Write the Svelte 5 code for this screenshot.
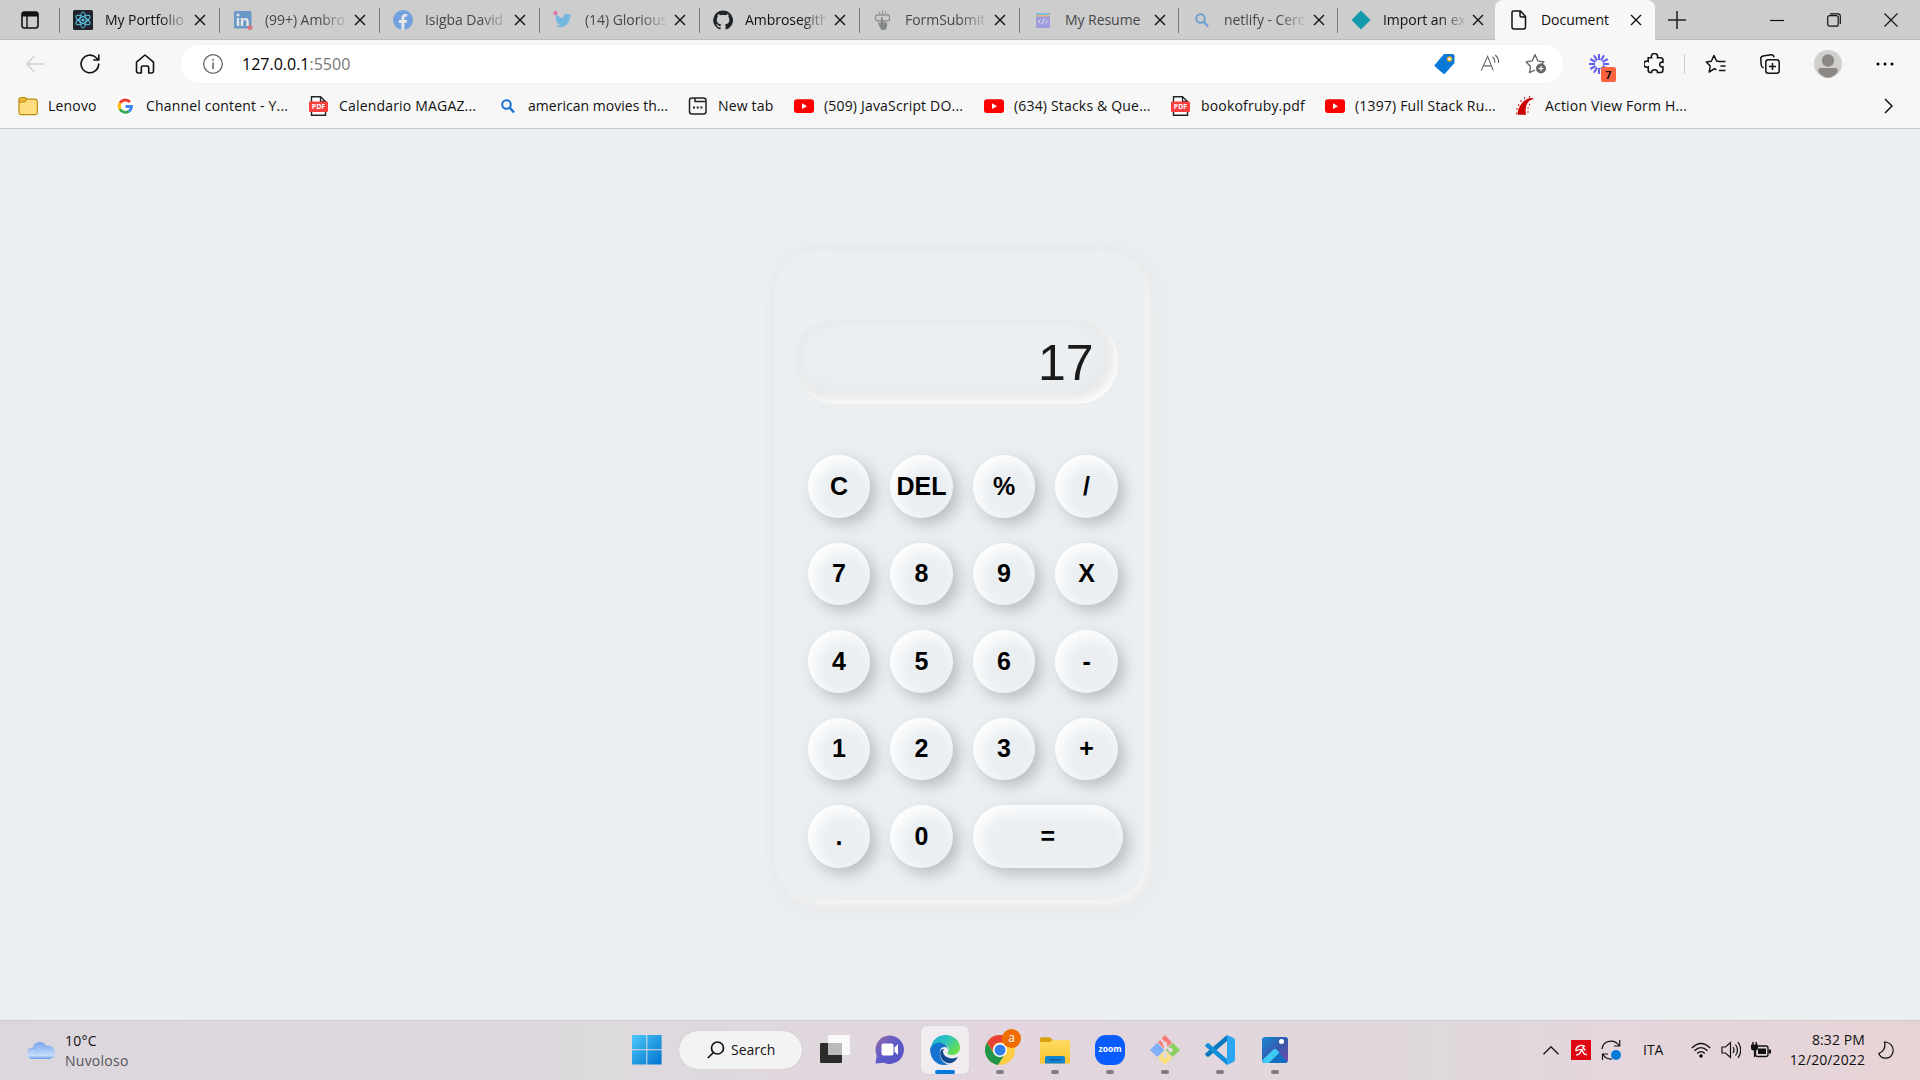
<script>
  const tabs = [
    { icon: 'react', title: 'My Portfolio', w: 160 },
    { icon: 'linkedin', title: '(99+) Ambrose', w: 160, dim: true },
    { icon: 'facebook', title: 'Isigba David', w: 160, dim: true },
    { icon: 'twitter', title: '(14) Glorious', w: 160, dim: true },
    { icon: 'github', title: 'Ambrosegithub', w: 160 },
    { icon: 'form', title: 'FormSubmit', w: 160, dim: true },
    { icon: 'resume', title: 'My Resume', w: 159, dim: true },
    { icon: 'lens', title: 'netlify - Cerca', w: 159, dim: true },
    { icon: 'diamond', title: 'Import an existing', w: 158 }
  ];
  const bookmarks = [
    { icon: 'folder', text: 'Lenovo', w: 98 },
    { icon: 'google', text: 'Channel content - Y...', w: 193 },
    { icon: 'pdf', text: 'Calendario MAGAZ...', w: 189 },
    { icon: 'lens', text: 'american movies th...', w: 190, snug: true },
    { icon: 'newtab', text: 'New tab', w: 106 },
    { icon: 'youtube', text: '(509) JavaScript DO...', w: 190 },
    { icon: 'youtube', text: '(634) Stacks & Que...', w: 187 },
    { icon: 'pdf', text: 'bookofruby.pdf', w: 154 },
    { icon: 'youtube', text: '(1397) Full Stack Ru...', w: 190 },
    { icon: 'rails', text: 'Action View Form H...', w: 200 }
  ];
  const keys = ['C', 'DEL', '%', '/', '7', '8', '9', 'X', '4', '5', '6', '-', '1', '2', '3', '+', '.', '0', '='];
  const apps = ['start', 'search', 'tasks', 'chat', 'edge', 'chrome', 'files', 'zoom', 'git', 'code', 'photos'];
  const running = ['chrome', 'files', 'zoom', 'git', 'code', 'photos'];
</script>

{#snippet icon(name)}
  <svg class="ic" viewBox="0 0 20 20" fill="none">
    {#if name === 'react'}
      <rect width="20" height="20" rx="1.5" fill="#20232a" />
      <g stroke="#5ccbe8" stroke-width="1">
        <ellipse cx="10" cy="10" rx="8" ry="3.1" transform="rotate(90 10 10)" />
        <ellipse cx="10" cy="10" rx="8" ry="3.1" transform="rotate(30 10 10)" />
        <ellipse cx="10" cy="10" rx="8" ry="3.1" transform="rotate(150 10 10)" />
      </g>
      <circle cx="10" cy="10" r="1.5" fill="#5ccbe8" />
    {:else if name === 'linkedin'}
      <rect x="1" y="1" width="17.5" height="17.5" rx="1.5" fill="#0a66c2" />
      <path d="M3.800 8h2.400v8H3.800zM7.800 8H10v1.200c1.300-2 5.800-2 5.800 2.200V16h-2.400v-4c0-2.700-3.200-2.600-3.200 0v4H7.800z" fill="#fff" />
      <circle cx="5" cy="5" r="1.500" fill="#fff" />
      <circle cx="17" cy="17.500" r="2.500" fill="#e0243a" />
    {:else if name === 'facebook'}
      <circle cx="10" cy="10" r="10" fill="#1877f2" />
      <path d="M8.400 20v-7H5.900v-3h2.500V7.800c0-2.500 1.500-3.900 3.800-3.900l2.100.2v2.500H13c-1.200 0-1.600.8-1.600 1.600V10h2.800l-.5 3h-2.300v7z" fill="#fff" />
    {:else if name === 'twitter'}
      <path d="M2 16c2.100.2 3.700-.4 5-1.500-1.700-.1-2.700-1-3.200-2.300h1.500C3.500 11.200 2.500 10 2.500 8.400l1.500.4C2.500 7.500 2.100 6 3 4.300c2 2.300 4.500 3.600 7.300 3.800C9.500 4.500 13.500 2.300 16 4.700l2.200-.9-1.500 2 2-.5-1.800 1.900C17 14.500 9.500 20 2 16z" fill="#1da1f2" />
      <circle cx="2.500" cy="3" r="2.200" fill="#f0287d" />
    {:else if name === 'github'}
      <path d="M10 .4a9.800 9.800 0 0 0-3.100 19.100c.5.1.7-.2.7-.5v-1.800c-2.800.6-3.300-1.300-3.300-1.300-.5-1.100-1.100-1.400-1.100-1.400-.9-.6.1-.6.1-.6 1 .1 1.500 1 1.500 1 .9 1.500 2.300 1.100 2.900.8.1-.6.300-1.100.6-1.300-2.200-.3-4.500-1.100-4.500-4.900 0-1.100.4-2 1-2.600-.1-.3-.4-1.300.1-2.600 0 0 .8-.3 2.700 1 1.600-.4 3.400-.4 5 0 1.900-1.300 2.700-1 2.700-1 .5 1.300.2 2.300.1 2.600.6.700 1 1.600 1 2.600 0 3.800-2.300 4.600-4.500 4.900.4.300.7.9.7 1.800V19c0 .3.200.6.700.5A9.800 9.800 0 0 0 10 .4z" fill="#1f242b" />
    {:else if name === 'form'}
      <rect x="2.500" y="5" width="14" height="6" rx="2" stroke="#555" stroke-width="1.300" />
      <path d="M6 1.500 7 4M9.500.5V4M13 1.500 12 4" stroke="#555" />
      <path d="M8 7.500c1-1 2 0 2 1V12l4 1c.7 3-.5 5-1.500 7h-4C7 18 5.500 15 5 13l3-.5z" fill="#3e4848" />
    {:else if name === 'resume'}
      <path d="M3 3h14v15H3z" fill="#6f6ff0" /><path d="M3 3h14v2.200H3z" fill="#38a8e8" /><path d="M3 5h14v1.500H3z" fill="#f9a33f" />
      <path d="m7.500 9.500-2 2 2 2M12.500 9.500l2 2-2 2M11 8.500l-2 6" stroke="#fff" />
    {:else if name === 'lens'}
      <circle cx="8.500" cy="8.500" r="4.300" stroke="#1372d3" stroke-width="2" /><path d="m12 12 4 4.500" stroke="#1372d3" stroke-width="2.400" />
    {:else if name === 'diamond'}
      <path d="m10 .5 9.500 9.500-9.500 9.500L.5 10z" fill="#159aad" />
    {:else if name === 'doc'}
      <path d="M4.500 1h7l5 5.500V17a2 2 0 0 1-2 2H5a2 2 0 0 1-2-2V2.500A1.500 1.500 0 0 1 4.500 1zM11 1v4.500a1.500 1.500 0 0 0 1.500 1.500h4" stroke="#111" stroke-width="1.500" />
    {:else if name === 'folder'}
      <path d="M1 4a2.500 2.500 0 0 1 2.500-2.500h3L9 3.200h8A2.200 2.200 0 0 1 19.300 5.500v11a2.200 2.200 0 0 1-2.200 2.200H3.200A2.200 2.200 0 0 1 1 16.500z" fill="#ffde82" stroke="#b98a0b" stroke-width="1.200" />
      <path d="M1 4.500a2.700 2.700 0 0 1 2.500-3h3L9 3.200 7 6H1z" fill="#eab63a" stroke="#b98a0b" />
    {:else if name === 'google'}
      <circle cx="9" cy="10" r="10" fill="#fff" />
      <g stroke-width="3">
        <path d="M14.100 6A6.300 6.300 0 0 0 4 7" stroke="#ea4335" />
        <path d="M4 7a6.300 6.300 0 0 0 0 6.200" stroke="#fbbc05" />
        <path d="M4 13.200a6.300 6.300 0 0 0 9 2" stroke="#34a853" />
        <path d="M13 15.200c1.700-1.200 2.400-2.700 2.400-4.700H9.500" stroke="#4285f4" />
      </g>
    {:else if name === 'pdf'}
      <path d="M2.500.7h9l5 4.800v13.800h-14z" fill="#fff" stroke="#222" stroke-width="1.400" /><path d="M11.500 1v4.500h5" stroke="#222" stroke-width="1.300" />
      <rect x="0" y="5.500" width="19" height="10.500" rx="1" fill="#f8403f" />
      <text x="9.500" y="13.300" text-anchor="middle" class="pdf">PDF</text>
    {:else if name === 'newtab'}
      <rect x="1.500" y="2" width="16.500" height="16" rx="2.500" stroke="#222" stroke-width="1.500" />
      <path d="M7 2v3.500h10.500" stroke="#222" stroke-width="1.500" />
      <path d="M5 11.500h2M8.700 11.500h2M12.400 11.500h2" stroke="#222" stroke-width="2" />
    {:else if name === 'youtube'}
      <rect y="3.200" width="20" height="13.800" rx="3" fill="#f00" /><path d="m8 7.300 5 2.900-5 2.900z" fill="#fff" />
    {:else if name === 'rails'}
      <path d="M2.500 18.800C2.500 12 7.500 5 13 2.500c2.500-1 4.800-.8 6 .8-6-.5-9.500 7-8 15.500z" fill="#c00" />
      <path d="M1 17.500h1M1.300 13h1.200M3 9h1.200M5.500 5h1.200M9 2h1.200M14 .8h1.200M12.500 12h1M12.500 16h1M14 8.500h1" stroke="#c00" stroke-width="1.300" />
    {/if}
  </svg>
{/snippet}

{#snippet cross()}
  <svg class="cross" viewBox="0 0 12 12"><path d="m1 1 10 10M11 1 1 11" stroke="#111" stroke-width="1.400" /></svg>
{/snippet}

{#snippet app(name)}
  <svg class="app" viewBox="0 0 30 30" fill="none">
    {#if name === 'start'}
      <path d="M0 0h14.300v14.300H0zM15.300 0h14.300v14.300H15.300zM0 15.300h14.300v14.300H0zM15.300 15.300h14.300v14.300H15.300z" fill="url(#win)" />
    {:else if name === 'tasks'}
      <rect y="8" width="22" height="20" rx="1" fill="#2c2c2a" /><rect x="8" y="0" width="22" height="20" rx="1" fill="#fff" fill-opacity=".82" /><path d="M8 8h14v12H8z" fill="#bbb" />
    {:else if name === 'chat'}
      <path d="M15 .5a14.200 14.200 0 1 1-6 27.200L.5 28.500l1.200-8A14.200 14.200 0 0 1 15 .5z" fill="url(#chat)" />
      <rect x="6.500" y="8.500" width="12" height="12" rx="2" fill="#fff" /><path d="m19.500 12.500 3.500-3.500v11L19.500 16.500z" fill="#fff" />
    {:else if name === 'edge'}
      <path d="M1 13C2 5 8 0 15 0c9 0 15 6 15 12.500 0 5-4 7.500-8 7.500-3 0-5-1-4.200-2.500C20 13 17 9 12 8.500 7 8 3 10 1 13z" fill="url(#edgeTop)" />
      <path d="M.1 14C2 9 7 7 11.500 8c4 .8 6.500 4 6.500 7.500 0-2.500-2-3.500-3.500-3.500-4 0-5 4-4.500 8 .6 5 4 8.500 8.500 9.500C8 32 0 25 .1 14z" fill="#1673d0" />
      <path d="M10.500 16C8.500 24 17 31 23.500 27c2-1.300 3.500-3 4.500-5.300-5 3.300-13 1.600-14.700-3.700-.5-1.500-.3-3 1.200-4-2 0-3.500.5-4 2z" fill="#114a91" />
    {:else if name === 'chrome'}
      <circle cx="15" cy="15" r="15" fill="#ffcd42" />
      <path d="M2 7.500A15 15 0 0 1 28 7.500H15a7 7 0 0 0-6.500 10z" fill="#e94134" />
      <path d="M2 7.500a15 15 0 0 0 11 22.400L20 19a7 7 0 0 1-11.500-1z" fill="#23964c" />
      <circle cx="15" cy="15" r="7" fill="#fff" /><circle cx="15" cy="15" r="5.500" fill="#337ee8" />
    {:else if name === 'files'}
      <path d="M0 4a1.700 1.700 0 0 1 1.700-1.700h8L13 5l-3 3H0z" fill="#db9f12" /><path d="M0 7h10l3-2h17v23.500H0z" fill="url(#fold)" />
      <path d="M5 28.500V23a2 2 0 0 1 2-2h16a2 2 0 0 1 2 2v5.500z" fill="#1683cf" /><path d="M9 24.700h12" stroke="#0a559c" stroke-width="1.200" />
    {:else if name === 'zoom'}
      <rect width="30" height="30" rx="11" fill="#0b5cff" /><text x="15" y="17.300" text-anchor="middle" class="zoomtext">zoom</text>
    {:else if name === 'git'}
      <path d="m15 0 7 7.500-7 7-7-7z" fill="#f77c78" /><path d="m7.200 7.800 7 7.200-7 7L0 15z" fill="#7eaff8" /><path d="m22.800 7.800 7.200 7.200-7.200 7-7-7z" fill="#8bd15f" /><path d="m15 15.800 7 7-7 7.200-7-7.200z" fill="#fbe07b" />
      <path d="m9 2.500 6 6v14M15 10l5 5" stroke="#e5dce0" stroke-width="2" /><g fill="#e5dce0"><circle cx="15" cy="9" r="2.200" /><circle cx="20.500" cy="15" r="2.300" /><circle cx="15" cy="21" r="2.300" /></g>
    {:else if name === 'code'}
      <path d="M22 6 4 21.500q-1 .8-2 0l-1.300-1.200q-1-1 0-2L22 0z" fill="#0878bd" /><path d="M22 24 4 8.500q-1-.8-2 0L.7 9.700q-1 1 0 2L22 30z" fill="#138ed8" />
      <path d="m22 0 6.500 3Q30 3.800 30 5.500v19q0 1.700-1.500 2.500L22 30z" fill="#29a7f2" />
    {:else if name === 'photos'}
      <rect x="2" y="2" width="26" height="26" rx="3" fill="url(#photo)" /><path d="m6 23 7.500-7.500q1.500-1.500 3 0L27.500 26.500Q26.700 28 25 28H6z" fill="#126fc2" /><path d="m2.300 25 11.200-10.500q1.500-1.300 3 0l3 3L9 28H5q-3 0-2.700-3z" fill="#3ecaf5" /><circle cx="21.500" cy="6.500" r="2.500" fill="#fff" />
    {/if}
  </svg>
{/snippet}

<svg class="defs" width="0" height="0">
  <defs>
    <linearGradient id="win" x2="1" y2="1"><stop stop-color="#4cc9fa" /><stop offset="1" stop-color="#0072ce" /></linearGradient>
    <linearGradient id="chat" x2="1" y2="1"><stop stop-color="#9967a6" /><stop offset=".5" stop-color="#5c5bcb" /><stop offset="1" stop-color="#5551bf" /></linearGradient>
    <linearGradient id="edgeTop" x2="1" y2=".6"><stop stop-color="#20a8df" /><stop offset=".5" stop-color="#2bc5be" /><stop offset="1" stop-color="#69e04a" /></linearGradient>
    <linearGradient id="fold" x2="0" y2="1"><stop stop-color="#ffdb63" /><stop offset="1" stop-color="#fcc32d" /></linearGradient>
    <linearGradient id="photo" x2="1" y2="1"><stop stop-color="#158ad6" /><stop offset=".5" stop-color="#345aae" /><stop offset="1" stop-color="#7945a6" /></linearGradient>
    <linearGradient id="cloud" x2="0" y2="1"><stop stop-color="#78a5ef" /><stop offset=".8" stop-color="#c4dcf8" /><stop offset="1" stop-color="#659cf1" /></linearGradient>
  </defs>
</svg>

<div class="screen">
  <header class="tabs">
    <div class="panel">
      <svg width="18" height="18" viewBox="0 0 18 18" fill="none"><rect x="1" y="1" width="16" height="16" rx="2.500" stroke="#111" stroke-width="1.600" /><path d="M1 3q0-2 2-2h12q2 0 2 2v2.500H1z" fill="#111" /><path d="M6 5v12" stroke="#111" stroke-width="1.400" /></svg>
    </div>
    {#each tabs as t}
      <div class="tab" style:width="{t.w}px">
        <span class="fav" class:dim={t.dim}>{@render icon(t.icon)}</span>
        <span class="title" class:dimtext={t.dim} class:whole={t.title === 'My Resume'}>{t.title}</span>
        {@render cross()}
      </div>
    {/each}
    <div class="tab active">
      <span class="fav">{@render icon('doc')}</span>
      <span class="title whole">Document</span>
      {@render cross()}
    </div>
    <svg class="plus" viewBox="0 0 18 18"><path d="M9 0v18M0 9h18" stroke="#222" stroke-width="1.500" /></svg>
    <div class="window">
      <svg width="14" height="14" viewBox="0 0 14 14"><path d="M0 7.500h14" stroke="#111" stroke-width="1.200" /></svg>
      <svg width="14" height="14" viewBox="0 0 14 14" fill="none" stroke="#111" stroke-width="1.200"><rect x=".7" y="2.700" width="10.500" height="10.500" rx="2" /><path d="M3 .8h8q2.300 0 2.300 2.300V11" /></svg>
      <svg width="14" height="14" viewBox="0 0 14 14"><path d="m.5.500 13 13M13.500.500l-13 13" stroke="#111" stroke-width="1.100" /></svg>
    </div>
  </header>

  <nav class="toolbar">
    <svg class="back" viewBox="0 0 20 20"><path d="M20 10H1M9.500 1 1 10l8.500 9" stroke="#ccc" stroke-width="1.400" fill="none" /></svg>
    <svg class="reload" viewBox="0 0 20 20"><path d="M18.700 9.500a8.800 8.800 0 1 1-2.500-5.700L18.500 6M18.800.5V6h-5.500" stroke="#111" stroke-width="1.600" fill="none" /></svg>
    <svg class="home" viewBox="0 0 20 20"><path d="M1.500 8.200 10 1l8.500 7.200V17a2 2 0 0 1-2 2h-2.800v-5.500q0-1.500-1.500-1.500H7.800q-1.500 0-1.500 1.500V19H3.500a2 2 0 0 1-2-2z" stroke="#111" stroke-width="1.600" stroke-linejoin="round" fill="none" /></svg>
    <div class="address">
      <svg class="info" viewBox="0 0 20 20" fill="none"><circle cx="10" cy="10" r="9.300" stroke="#666" stroke-width="1.300" /><path d="M10 8.500V15M10 5v1.800" stroke="#666" stroke-width="1.600" /></svg>
      <span class="url">127.0.0.1<i>:5500</i></span>
      <svg class="tag" viewBox="0 0 20 20"><path d="M9.500 0H18a2 2 0 0 1 2 2v7L10.500 19.500q-1 1-2 0L.5 12.500q-1-1 0-2z" fill="#0879d8" /><circle cx="15" cy="5" r="2" fill="#fff" stroke="#e8ad20" stroke-width="1.300" /></svg>
      <svg class="read" viewBox="0 0 20 20" fill="none" stroke="#666" stroke-width="1.200"><path d="M.7 17.500 7.500 2.500l6 15M3 12.500h8.500M12.500 3q3 2.500 2.500 6M15.500 1q4 3.500 3.500 8.500" /></svg>
      <svg class="addfav" viewBox="0 0 22 20" fill="none"><path d="m10 16.500-5.500 2.700 1-6.200L1 8.300l6.200-.9L10 1l2.800 6.400 6.200.9-2.500 2.500" stroke="#666" stroke-width="1.300" stroke-linejoin="round" /><circle cx="16" cy="15" r="5" fill="#666" /><path d="M16 12.500v5M13.500 15h5" stroke="#fff" stroke-width="1.200" /></svg>
    </div>
    <div class="ext">
      <svg width="20" height="20" viewBox="0 0 20 20"><g stroke="#6560ef" stroke-width="2.100"><path d="M10 0v6M10 14v6M0 10h6M14 10h6M5 1.300l3 5.200M12 13.500l3 5.200M1.300 5l5.200 3M13.500 12l5.200 3M15 1.300l-3 5.200M8 13.500l-3 5.200M18.700 5l-5.200 3M6.500 12l-5.200 3" /></g></svg>
      <b>7</b>
    </div>
    <svg class="puzzle" viewBox="0 0 20 20"><path d="M4 4.500h3.200a3 3 0 1 1 5.600 0H16a2 2 0 0 1 2 2v2.300c-4-1-4 5.400 0 4.400v3.300a2 2 0 0 1-2 2h-3.200c.5-3.500-5.800-3.500-5.600 0H6a2 2 0 0 1-2-2v-3.300a2.900 2.900 0 1 1 0-5.200z" stroke="#111" stroke-width="1.500" fill="none" /></svg>
    <span class="divider"></span>
    <svg class="favs" viewBox="0 0 20 20"><path d="M13 7.500h7M15 12h5M13.500 16.500H20M11 16l-2-1.400L3.700 18l1-6L.8 8l5-.8L8.500 1.500l2.700 5.700h2" stroke="#111" stroke-width="1.500" fill="none" stroke-linejoin="round" /></svg>
    <svg class="coll" viewBox="0 0 20 20"><g fill="none" stroke="#111" stroke-width="1.500"><rect x="5.800" y="5.800" width="13.400" height="13.400" rx="2.500" /><path d="M12.500 9v7M9 12.500h7M3.500 14Q1.500 13 1.200 11L.8 4.500Q.8 2.500 3 2L11 .8q2.500-.2 3 2.500" /></g></svg>
    <svg class="avatar" viewBox="0 0 28 28"><circle cx="14" cy="14" r="14" fill="#d2d0ce" /><circle cx="14" cy="10.500" r="6.200" fill="#8a8784" /><path d="M4 20.500q0-2.500 3-2.500h14q3 0 3 2.500C20 30 8 30 4 20.500z" fill="#8a8784" /></svg>
    <svg class="more" viewBox="0 0 18 4"><circle cx="2" cy="2" r="1.500" /><circle cx="9" cy="2" r="1.500" /><circle cx="16" cy="2" r="1.500" /></svg>
  </nav>

  <div class="bookmarks">
    {#each bookmarks as b}
      <div class="bookmark" class:snug={b.snug} style:width="{b.w}px"><span class="fav">{@render icon(b.icon)}</span><span>{b.text}</span></div>
    {/each}
    <svg class="next" viewBox="0 0 9 16"><path d="m1 1 7 7-7 7" stroke="#111" stroke-width="1.500" fill="none" /></svg>
  </div>

  <main>
    <section class="calculator">
      <div class="display">17</div>
      <div class="keys">
        {#each keys as k}<button class:equal={k === '='}>{k}</button>{/each}
      </div>
    </section>
  </main>

  <footer>
    <div class="weather">
      <svg width="30" height="20" viewBox="0 0 30 20"><path d="M6 19A6 6 0 0 1 6 8h1.500a7.500 7.500 0 0 1 14-2C27 5 30 8.500 30 12.500S27 19 24 19z" fill="url(#cloud)" /><path d="M2 10q6-4 11 1M17 9q4-5 9-2" stroke="#6c9be5" stroke-width="1" opacity=".45" fill="none" /></svg>
      <div><p>10°C</p><p class="soft">Nuvoloso</p></div>
    </div>
    <div class="apps">
      {#each apps as a}
        {#if a === 'search'}
          <div class="search"><svg width="18" height="18" viewBox="0 0 18 18" fill="none" stroke="#111" stroke-width="1.700"><circle cx="10.500" cy="7" r="6" /><path d="M6.500 11.500.8 17" /></svg>Search</div>
        {:else}
          <div class="slot {a}" class:running={running.includes(a)}>
            {@render app(a)}
            {#if a === 'chrome'}<span class="badge">a</span>{/if}
          </div>
        {/if}
      {/each}
    </div>
    <div class="tray">
      <svg class="up" viewBox="0 0 16 9"><path d="m.5 8.300 7.500-7.500 7.500 7.500" stroke="#111" stroke-width="1.300" fill="none" /></svg>
      <svg class="avira" viewBox="0 0 20 20"><path fill="#df0712" d="M0 0h20v20H0z" /><path d="M4.800 11C4.800 6.500 9.500 4 13.500 6.300c-1.300.3-1.700 1-1.500 2 1.400.5 2 1.200 2.200 2.200M4.800 11q2.500-1.800 6-1.300L9 13q-1.300 2.300-3.800 1.700M11 9.700l1.300 3q1 2.200 3.500 1.800" stroke="#fff" stroke-width="1.400" stroke-linejoin="round" fill="none" /></svg>
      <svg class="sync" viewBox="0 0 20 20"><path d="M1 9C2 .5 13-2 18.500 6M18.700 0v6H13M1.500 20v-6H7M2 14.500Q5 19.500 11 19" stroke="#111" stroke-width="1.200" fill="none" /><circle cx="15" cy="15" r="5" fill="#0879dc" /></svg>
      <span class="lang">ITA</span>
      <svg class="wifi" viewBox="0 0 20 16"><g fill="none" stroke="#111" stroke-width="1.300"><path d="M.8 6Q10-3 19.200 6M3.500 8.800q6.500-6.500 13 0M6.200 11.500q3.800-3.800 7.600 0" /></g><circle cx="10" cy="14" r="1.700" /></svg>
      <svg class="vol" viewBox="0 0 20 18"><path d="M1 6h3.500L9.500 1.500v15L4.500 12H1zM12 6q2 3 0 6M14.500 3.500q4 5.500 0 11M17 1q5.500 8 0 16" stroke="#111" stroke-width="1.200" fill="none" /></svg>
      <svg class="bat" viewBox="0 0 20 16"><rect x="4.500" y="4" width="12.500" height="10.500" rx="2" stroke="#111" stroke-width="1.300" fill="none" /><path d="M7 6.500h8v5.500H7zM17.500 7.500H20v4h-2.500zM0 2.500h7V6q0 2.500-2.800 2.500V15H2.900V8.500Q0 8.500 0 6zM1.200 0h1.400v3H1.200zM4.500 0h1.400v3H4.500z" fill="#111" /></svg>
      <div class="clock"><p>8:32 PM</p><p>12/20/2022</p></div>
      <svg class="moon" viewBox="0 0 16 18"><path d="M6.500 1q2 8-5.700 11.500C3 18.500 12 19 14.500 12.500 17 6 12 1 6.500 1z" stroke="#111" stroke-width="1.200" fill="none" /></svg>
    </div>
  </footer>
</div>

<style>
  :global(body) { margin: 0; overflow: hidden; }
  * { box-sizing: border-box; }
  p { margin: 0; }
  svg { display: block; flex: none; }
  .defs { position: absolute; }
  .screen { width: 1920px; height: 1080px; display: flex; flex-direction: column; font: 14px/20px "Open Sans", "Noto Sans", sans-serif; color: #111; background: #f7f7f7; }
  .tabs { height: 40px; display: flex; align-items: center; background: #cdcdcd; border-bottom: 1px solid #bbb; flex: none; }
  .panel { width: 59px; padding-left: 21px; }
  .tab { height: 40px; display: flex; align-items: center; padding-left: 14px; position: relative; flex: none; }
  .tab:not(.active)::before { content: ""; width: 1px; height: 25px; background: #777; position: absolute; left: 0; top: 8px; }
  .ic { width: 20px; height: 20px; }
  .fav { width: 20px; flex: none; }
  .dim { opacity: .5; }
  .title { width: 81px; margin-left: 12px; overflow: hidden; white-space: nowrap; flex: none; letter-spacing: -.05px; mask-image: linear-gradient(90deg, #000 68%, rgba(0, 0, 0, .12)); }
  .whole { mask-image: none; }
  .dimtext { color: #484848; }
  .cross { width: 12px; height: 12px; margin-left: 8px; }
  .active { width: 160px; background: #f7f7f7; border-radius: 8px 8px 0 0; padding-left: 14px; }
  .plus { width: 18px; height: 18px; margin-left: 13px; }
  .window { display: flex; gap: 43px; margin-left: auto; padding-right: 22px; }

  .toolbar { height: 47px; display: flex; align-items: center; padding-left: 25px; flex: none; }
  .back { width: 20px; height: 18px; }
  .reload { width: 20px; height: 20px; margin-left: 35px; }
  .home { width: 20px; height: 20px; margin-left: 35px; }
  .address { width: 1384px; height: 38px; margin-left: 25px; background: #fff; border-radius: 19px; box-shadow: 0 0 3px #e7e7e7; display: flex; align-items: center; padding-left: 23px; }
  .info { width: 20px; height: 20px; }
  .url { font-size: 16px; margin-left: 19px; width: 1192px; color: #000; }
  .url i { font-style: normal; color: #777; }
  .tag { width: 21px; height: 20px; }
  .read { width: 20px; height: 19px; margin-left: 25px; }
  .addfav { width: 22px; height: 21px; margin-left: 25px; }
  .ext { width: 20px; height: 20px; margin-left: 25px; position: relative; }
  .ext b { position: absolute; left: 12px; top: 13px; width: 15px; height: 15px; border-radius: 2px; background: #ff6340; font-size: 11px; line-height: 16px; text-align: center; }
  .puzzle { width: 21px; height: 21px; margin-left: 35px; }
  .divider { width: 1px; height: 20px; background: #ccc; margin-left: 19px; }
  .favs { width: 21px; height: 20px; margin-left: 20px; }
  .coll { width: 20px; height: 20px; margin-left: 34px; }
  .avatar { width: 28px; height: 28px; margin-left: 34px; }
  .more { width: 18px; height: 4px; margin-left: 34px; }

  .bookmarks { height: 42px; display: flex; align-items: center; padding: 0 0 3px 18px; border-bottom: 1px solid #c4c4c4; flex: none; letter-spacing: .18px; }
  .bookmark { display: flex; gap: 10px; align-items: center; white-space: nowrap; flex: none; }
  .snug { letter-spacing: .03px; }
  .next { width: 9px; height: 16px; margin: 0 27px 0 auto; }
  .pdf { font: bold 7px "Open Sans", sans-serif; fill: #fff; letter-spacing: 0; }

  main { height: 891px; background: #ebeff2; display: flex; justify-content: center; align-items: flex-start; padding-top: 121px; flex: none; }
  .calculator { width: 370px; height: 650px; border-radius: 40px; padding: 69px 20px 0; font-family: "Liberation Sans", Arial, sans-serif; background: #ebeff2; box-shadow: 5px 5px 10px rgba(255, 255, 255, .65), 6px 6px 20px rgba(215, 208, 202, .4), 2px 2px 12px rgba(215, 210, 205, .2); }
  .display { width: 323px; height: 85px; border-radius: 40px; padding-right: 24.500px; font-size: 50px; line-height: 88px; text-align: right; color: #1a1a1a; box-shadow: inset -5px -5px 10px rgba(255, 255, 255, .9), inset -7px -7px 20px rgba(215, 208, 202, .45), inset 0 0 12px rgba(215, 210, 205, .15); }
  .keys { display: grid; grid-template-columns: repeat(4, 62.500px); column-gap: 20px; row-gap: 25px; padding: 51px 0 0 12.800px; }
  button { height: 62.500px; border: 0; padding: 0; border-radius: 32px; background: #ebeff2; color: #000; font: bold 25px "Liberation Sans", Arial, sans-serif; box-shadow: inset 6px 6px 16px #fff, 6px 6px 15px #b9bdc0; }
  .equal { width: 150px; }

  footer { height: 60px; flex: none; border-top: 1px solid #cdc8cc; background: linear-gradient(90deg, #dcd7dd, #dddade 32%, #e3d5de 51%, #dfd8dc 75%, #e4d6dc 85%, #e6d3d6); display: flex; }
  .weather { width: 632px; display: flex; gap: 10px; padding: 10px 0 0 25px; letter-spacing: .25px; }
  .weather svg { margin-top: 9px; }
  .soft { color: #555; }
  .apps { display: flex; height: 58px; align-items: center; width: 900px; }
  .app { width: 30px; height: 30px; }
  .slot { width: 30px; margin-right: 25px; position: relative; }
  .start { margin-right: 17px; }
  .search { width: 123px; height: 38px; margin-right: 18px; background: #f4f3f4; border-radius: 19px; box-shadow: 0 0 1px #aaa; display: flex; align-items: center; gap: 6px; padding-left: 28px; flex: none; }
  .edge { width: 48px; height: 48px; padding: 9px; border-radius: 5px; background: #f0ecf0; box-shadow: 0 0 1px #aaa; margin: 0 16px 0 -9px; }
  .running::after, .edge::after { content: ""; position: absolute; left: 11px; top: 35px; width: 8px; height: 4px; border-radius: 2px; background: #837c80; }
  .edge::after { left: 14px; top: 44px; width: 20px; background: #0879d8; }
  .badge { position: absolute; left: 17px; top: -6px; width: 19px; height: 19px; border-radius: 50%; background: #ee6c00; color: #fff; font-size: 12px; line-height: 18px; text-align: center; }
  .zoomtext { font: bold 8.500px "Open Sans", sans-serif; fill: #fff; }
  .tray { display: flex; align-items: center; width: 388px; padding-left: 11px; height: 58px; }
  .up { width: 16px; height: 9px; }
  .avira { width: 20px; height: 20px; margin-left: 12px; }
  .sync { width: 20px; height: 20px; margin-left: 10px; }
  .lang { width: 21px; margin-left: 22px; }
  .wifi { width: 20px; height: 16px; margin-left: 27px; }
  .vol { width: 20px; height: 18px; margin-left: 10px; }
  .bat { width: 20px; height: 16px; margin-left: 10px; }
  .clock { width: 94px; text-align: right; letter-spacing: .1px; }
  .moon { width: 16px; height: 18px; margin-left: 13px; }
</style>
